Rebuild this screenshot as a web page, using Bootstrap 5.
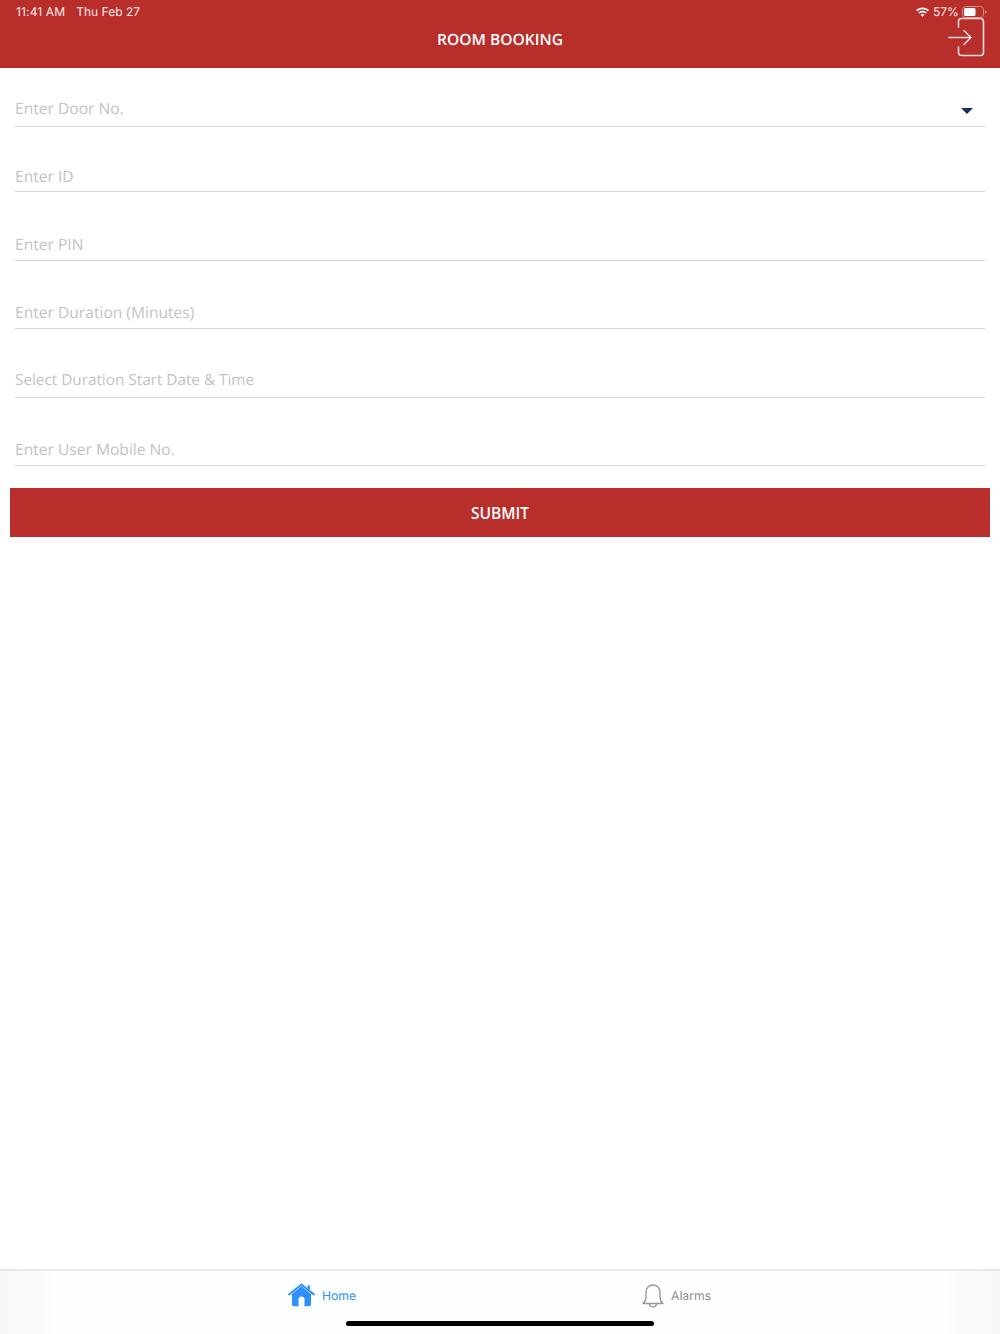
<!DOCTYPE html>
<html lang="en">
<head>
<meta charset="utf-8">
<title>Room Booking</title>
<link rel="stylesheet" href="https://cdn.jsdelivr.net/npm/bootstrap@5.3.0/dist/css/bootstrap.min.css">
<style>
html,body{height:100%;}
body{font-family:"Open Sans","Liberation Sans",sans-serif;background:#fff;overflow:hidden;text-rendering:geometricPrecision;}
.app-shell{height:1334px;}
.app-head{height:68px;background:#b72e2b;color:#fff;}
.status-txt{font-family:Inter,"Liberation Sans",sans-serif;font-size:12px;line-height:14px;color:#fbeaea;top:5px;}
.status-l{left:16px;}
.status-t{letter-spacing:.14px;}
.status-l span+span{margin-left:11px;}
.status-r{left:915px;width:74px;gap:3px;}
.head-title{font-size:15.6px;font-weight:600;line-height:20px;padding-top:29px;}
.exit-ico{top:16px;left:947px;}
.field{border-bottom:1.5px solid #d6d6d6;margin:0 15px;}
.field .form-control{border:0;border-radius:0;padding:0;background:transparent;box-shadow:none;font-size:15.6px;line-height:22px;height:22px;color:#333;text-rendering:geometricPrecision;}
.field .form-control::placeholder{color:#c3c3c3;opacity:1;}
.f1{height:59px;padding-top:29px;}
.f2{height:65px;padding-top:38px;}
.f3{height:68.5px;padding-top:41px;}
.f4{height:68px;padding-top:40px;}
.f5{height:69px;padding-top:40px;}
.f5 .form-control{font-size:15.3px;}
.f6{height:68px;padding-top:40px;}
.caret-mark{right:12px;top:39.5px;width:0;height:0;border-left:6px solid transparent;border-right:6px solid transparent;border-top:6px solid #1b2a63;}
.submit-btn{margin:22px 10px 0;height:49px;width:980px;background:#b72e2b;border:0;border-radius:0;color:#fff;font-size:15.5px;font-weight:600;line-height:22px;padding-top:7px;}
.submit-btn:hover,.submit-btn:active{background:#b72e2b!important;color:#fff!important;}
.tabbar{height:65px;background:#fdfefe;border-top:2px solid #e8e8e8;}
.tab-home{left:288px;top:12px;}
.tab-alarm{left:642px;top:12px;}
.tab-home svg,.tab-alarm svg{margin-right:7px;}
.tab-label{font-family:Inter,"Liberation Sans",sans-serif;font-size:12.2px;line-height:16px;}
.tab-on{color:#2f8ffb;}
.tab-off{color:#8e8e8e;}
.home-bar{left:346px;top:50px;width:308px;height:5px;background:#000;border-radius:3px;}
.edge-l,.edge-r{top:0;bottom:0;width:54px;}
.edge-l{left:0;background:linear-gradient(90deg,#f8f8f8,#fafafa 70%,#fdfefe);}
.edge-r{right:0;background:linear-gradient(270deg,#f8f8f8,#fafafa 70%,#fdfefe);}
</style>
</head>
<body>
<div class="app-shell d-flex flex-column">
  <header class="app-head position-relative text-center flex-shrink-0">
    <div class="status-txt status-l position-absolute"><span class="status-t">11:41 AM</span><span>Thu Feb 27</span></div>
    <div class="status-txt status-r position-absolute d-flex align-items-center">
      <svg class="flex-shrink-0" width="15" height="11" viewBox="0 0 15 11" fill="#fff"><path d="M7.5 2.2c2.1 0 4 .8 5.4 2.1l1.1-1.2C12.3 1.500 10 .5 7.500.5S2.700 1.500 1 3.100l1.100 1.200C3.500 3 5.400 2.200 7.500 2.200z"/><path d="M7.500 5.400c1.200 0 2.300.5 3.100 1.200l1.200-1.200C10.700 4.300 9.200 3.700 7.500 3.700s-3.200.6-4.300 1.700l1.200 1.200c.8-.7 1.900-1.200 3.100-1.200z"/><path d="M7.500 7c-.8 0-1.400.3-1.900.8l1.900 2 1.900-2C8.900 7.300 8.300 7 7.500 7z"/></svg>
      <span>57%</span>
      <svg class="flex-shrink-0" width="25" height="12" viewBox="0 0 25 12"><rect x=".5" y=".5" width="21" height="11" rx="3" fill="none" stroke="#d98a88"/><rect x="2" y="2" width="11.500" height="8" rx="1.500" fill="#fff"/><rect x="23" y="4.500" width="1.500" height="3" rx=".7" fill="#d98a88"/></svg>
    </div>
    <div class="head-title">ROOM BOOKING</div>
    <svg class="exit-ico position-absolute" width="40" height="42" viewBox="0 0 40 42" fill="none" stroke="#f6dedd" stroke-width="1.600" stroke-linecap="round" stroke-linejoin="round"><path d="M11.500 11V5.500A3 3 0 0 1 14.500 2.500H33.500A3 3 0 0 1 36.500 5.500V36.500A3 3 0 0 1 33.500 39.500H14.500A3 3 0 0 1 11.500 36.500V31"/><path d="M2 21.500H24M17 14.500 24 21.500 17 28.500"/></svg>
  </header>
  <form class="flex-grow-1">
    <div class="field f1 position-relative"><input class="form-control" type="text" placeholder="Enter Door No." aria-label="Enter Door No."><span class="caret-mark position-absolute"></span></div>
    <div class="field f2"><input class="form-control" type="text" placeholder="Enter ID" aria-label="Enter ID"></div>
    <div class="field f3"><input class="form-control" type="text" placeholder="Enter PIN" aria-label="Enter PIN"></div>
    <div class="field f4"><input class="form-control" type="text" placeholder="Enter Duration (Minutes)" aria-label="Enter Duration (Minutes)"></div>
    <div class="field f5"><input class="form-control" type="text" placeholder="Select Duration Start Date &amp; Time" aria-label="Select Duration Start Date and Time"></div>
    <div class="field f6"><input class="form-control" type="text" placeholder="Enter User Mobile No." aria-label="Enter User Mobile No."></div>
    <button type="button" class="btn submit-btn d-block">SUBMIT</button>
  </form>
  <nav class="tabbar position-relative flex-shrink-0">
    <div class="edge-l position-absolute"></div>
    <div class="edge-r position-absolute"></div>
    <div class="tab-home position-absolute d-flex align-items-center">
      <svg width="27" height="25" viewBox="0 0 27 25" fill="#2f8ffb"><path d="M13.500 3 4 11v10.500A1.800 1.800 0 0 0 5.800 23.300H10.500V16.500a3 3 0 0 1 6 0V23.300H21.200A1.800 1.800 0 0 0 23 21.500V11z"/><path d="M19.500 2.500h2.500V7l-2.500-2z"/><path d="M1 11.500 13.500 1.500 26 11.500" fill="none" stroke="#2f8ffb" stroke-width="1.800" stroke-linecap="round" stroke-linejoin="round"/></svg>
      <span class="tab-label tab-on">Home</span>
    </div>
    <div class="tab-alarm position-absolute d-flex align-items-center">
      <svg width="22" height="25" viewBox="0 0 22 25" fill="none" stroke="#9a9a9a" stroke-width="1.400" stroke-linecap="round" stroke-linejoin="round"><path d="M1 20.500c2-1.500 3-3.500 3-6.500V9a7 7 0 0 1 14 0v5c0 3 1 5 3 6.500z"/><path d="M7.500 20.500c0 4.500 7 4.500 7 0"/></svg>
      <span class="tab-label tab-off">Alarms</span>
    </div>
    <div class="home-bar position-absolute"></div>
  </nav>
</div>
<script src="https://cdn.jsdelivr.net/npm/bootstrap@5.3.0/dist/js/bootstrap.bundle.min.js"></script>
</body>
</html>
